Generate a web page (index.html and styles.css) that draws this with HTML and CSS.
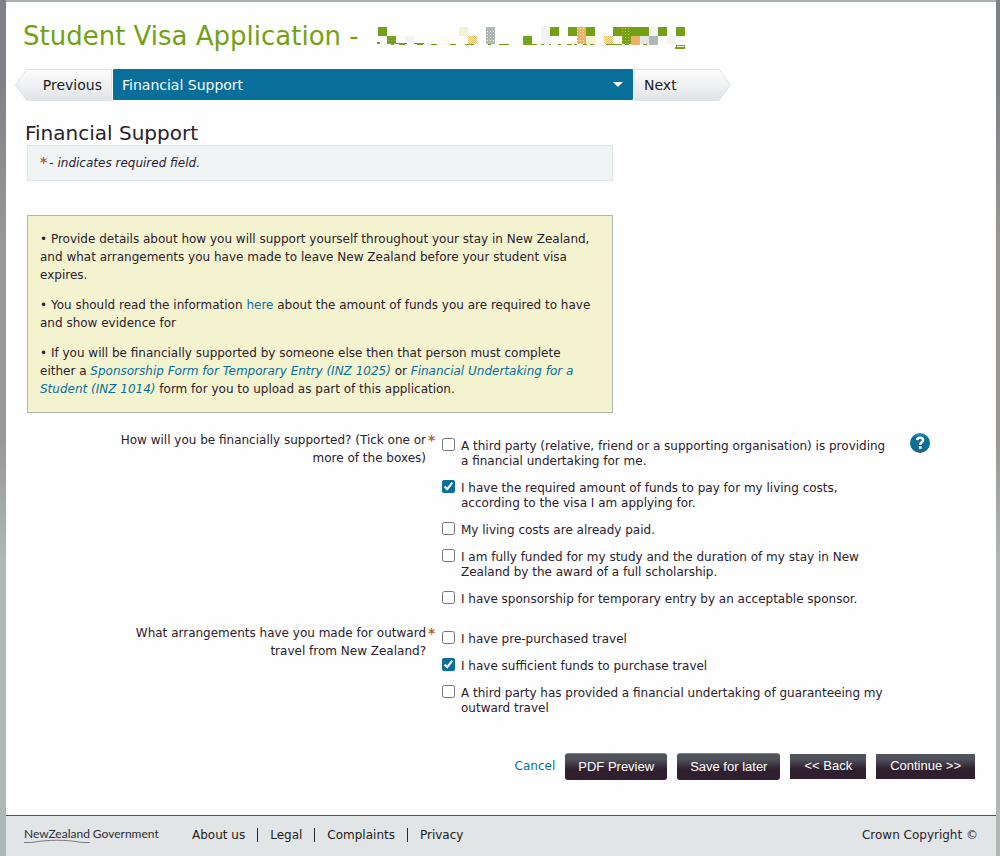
FILE: index.html
```html
<!DOCTYPE html>
<html lang="en">
<head>
<meta charset="utf-8">
<title>Student Visa Application - Financial Support</title>
<link rel="stylesheet" href="styles.css">
</head>
<body>
<div class="page">
  <main class="content">
    <header class="title-row">
      <h1 class="title">Student Visa Application -</h1>
      <svg class="redacted" viewBox="376 20 312 32" width="312" height="32" aria-hidden="true">
        <defs>
          <pattern id="orange-dots" width="2" height="2" patternUnits="userSpaceOnUse"><path d="M0 0h1v1h-1zM1 1h1v1h-1z" fill="#eab15f"/></pattern>
          <pattern id="white-dots" width="3" height="3" patternUnits="userSpaceOnUse"><path d="M1 1h1v1h-1z" fill="#f5f3e8"/></pattern>
          <pattern id="gray-dots" width="3" height="3" patternUnits="userSpaceOnUse"><path d="M1 1h1v1h-1z" fill="#98a59a"/></pattern>
          <pattern id="cream-dots" width="3" height="3" patternUnits="userSpaceOnUse"><path d="M1 1h2v1h-2z" fill="#f3f2cf"/></pattern>
          <pattern id="gold-dots" width="3" height="3" patternUnits="userSpaceOnUse"><path d="M1 1h1v1h-1z" fill="#e5ae5c"/></pattern>
        </defs>
        <g fill="#73a114">
          <path d="M378 27h9v9h-9zM387 36h9v8h-9zM523 36h9v8h-9zM550 27h9v9h-9zM568 27h9v9h-9zM586 27h9v9h-9zM613 27h36v9h-36zM622 36h9v8h-9zM658 27h9v9h-9zM676 27h9v9h-9z"/>
          <path d="M377 42h3v2h-3zM391 43h3v2h-3zM396 43h11v1h-11zM399 44h6v1h-6zM414 43h10v1h-10zM417 44h6v1h-6zM431 44h6v1h-6zM450 44h6v1h-6zM465 44h9v1h-9zM488 44h3v1h-3zM499 44h10v1h-10zM523 44h14v1h-14zM541 44h3v1h-3zM549 44h2v1h-2zM558 44h3v1h-3zM567 44h5v1h-5zM574 44h3v1h-3zM583 44h4v1h-4zM590 44h4v1h-4zM606 44h16v1h-16zM625 44h4v1h-4zM633 44h4v1h-4zM643 44h4v1h-4z"/>
          <path d="M676 45h9v4h-10v-2h1z"/>
        </g>
        <path d="M387 36h9v8h-9zM523 36h9v8h-9z" fill="url(#gray-dots)"/>
        <path d="M622 27h9v17h-9z" fill="url(#gold-dots)"/>
        <path d="M459 27h9v9h-9zM586 36h9v8h-9z" fill="#f4f3d0"/>
        <path d="M441 37h9v7h-9z" fill="url(#cream-dots)"/>
        <path d="M405 36h9v7h-9zM541 27h9v17h-9zM649 27h9v9h-9zM667 36h9v8h-9z" fill="#f0f4f6"/>
        <path d="M468 36h9v8h-9zM604 36h9v8h-9z" fill="url(#orange-dots)"/>
        <path d="M486 27h9v17h-9zM649 36h9v9h-9z" fill="#b0b8b6"/>
        <path d="M487 29h7v13h-7z" fill="url(#white-dots)"/>
        <path d="M577 27h9v17h-9zM631 36h9v9h-9z" fill="#ebb264"/>
        <path d="M577 27h9v17h-9z" fill="url(#white-dots)"/>
        <path d="M640 36h9v8h-9z" fill="#e1e5e7"/>
        <path d="M677 46h7v1h-7z" fill="#f8fbf0"/>
      </svg>
    </header>

    <nav class="steps" aria-label="Application sections">
      <button class="step step-prev" type="button">
        <svg class="step-shape" viewBox="0 0 98 32" preserveAspectRatio="none" aria-hidden="true">
          <defs><linearGradient id="step-fill" x2="0" y2="1"><stop offset="0" stop-color="#fdfdfd"/><stop offset="1" stop-color="#e0e4e6"/></linearGradient></defs>
          <path d="M12 .5H97.500V31.500H12L.5 16Z" fill="url(#step-fill)" stroke="#e0e4e6"/>
        </svg>
        <span class="step-text">Previous</span>
      </button>
      <div class="section-picker">
        <select class="section-select" aria-label="Section"><option>Financial Support</option></select>
        <svg class="caret" viewBox="0 0 10 5" width="10" height="5" aria-hidden="true"><path d="M0 0h10L5 5z" fill="#fff"/></svg>
      </div>
      <button class="step step-next" type="button">
        <svg class="step-shape" viewBox="0 0 98 32" preserveAspectRatio="none" aria-hidden="true">
          <path d="M.5 .5H86L97.500 16L86 31.500H.5Z" fill="url(#step-fill)" stroke="#e0e4e6"/>
        </svg>
        <span class="step-text">Next</span>
      </button>
    </nav>

    <h2 class="section-title">Financial Support</h2>
    <p class="required-note"><span class="star">*</span>- indicates required field.</p>

    <section class="guidance">
      <p>• Provide details about how you will support yourself throughout your stay in New Zealand, and what arrangements you have made to leave New Zealand before your student visa expires.</p>
      <p>• You should read the information <a href="#">here</a> about the amount of funds you are required to have and show evidence for</p>
      <p>• If you will be financially supported by someone else then that person must complete either a <a href="#"><em>Sponsorship Form for Temporary Entry (INZ 1025)</em></a> or <a href="#"><em>Financial Undertaking for a Student (INZ 1014)</em></a> form for you to upload as part of this application.</p>
    </section>

    <form class="form">
      <div class="question" role="group" aria-labelledby="q-support">
        <div class="question-label" id="q-support">How will you be financially supported? (Tick one or more of the boxes)</div>
        <span class="star">*</span>
        <div class="options">
          <label class="option"><input type="checkbox"><span>A third party (relative, friend or a supporting organisation) is providing a financial undertaking for me.</span></label>
          <label class="option"><input type="checkbox" checked><span>I have the required amount of funds to pay for my living costs, according to the visa I am applying for.</span></label>
          <label class="option"><input type="checkbox"><span>My living costs are already paid.</span></label>
          <label class="option"><input type="checkbox"><span>I am fully funded for my study and the duration of my stay in New Zealand by the award of a full scholarship.</span></label>
          <label class="option"><input type="checkbox"><span>I have sponsorship for temporary entry by an acceptable sponsor.</span></label>
        </div>
        <button class="help" type="button" aria-label="Help">
          <svg viewBox="0 0 20 20" width="20" height="20" aria-hidden="true">
            <defs><linearGradient id="help-fill" x2="0" y2="1"><stop offset="0" stop-color="#2f8db5"/><stop offset=".25" stop-color="#086f9b"/><stop offset=".75" stop-color="#086f9b"/><stop offset="1" stop-color="#3f5668"/></linearGradient></defs>
            <circle cx="10" cy="10" r="10" fill="url(#help-fill)"/>
            <path d="M7 7.200C7.200 5.300 8.500 4.800 10 4.800C12 4.800 13.100 5.800 13.100 7.200C13.100 9.300 10.200 9 10.200 12" fill="none" stroke="#fff" stroke-width="2.500"/>
            <path d="M8.900 13.300h2.700v2.500h-2.700z" fill="#fff"/>
          </svg>
        </button>
      </div>

      <div class="question" role="group" aria-labelledby="q-travel">
        <div class="question-label" id="q-travel">What arrangements have you made for outward travel from New Zealand?</div>
        <span class="star">*</span>
        <div class="options">
          <label class="option"><input type="checkbox"><span>I have pre-purchased travel</span></label>
          <label class="option"><input type="checkbox" checked><span>I have sufficient funds to purchase travel</span></label>
          <label class="option"><input type="checkbox"><span>A third party has provided a financial undertaking of guaranteeing my outward travel</span></label>
        </div>
      </div>

      <div class="actions">
        <a class="cancel" href="#">Cancel</a>
        <button class="btn btn-round" type="button">PDF Preview</button>
        <button class="btn btn-round" type="button">Save for later</button>
        <button class="btn" type="button">&lt;&lt; Back</button>
        <button class="btn" type="button">Continue &gt;&gt;</button>
      </div>
    </form>
  </main>

  <footer class="footer">
    <div class="logo"><span class="logo-nz">NewZealand<svg class="logo-line" viewBox="0 0 68 4" preserveAspectRatio="none" aria-hidden="true"><path d="M0 3.500H8C25 .5 43 .5 60 3.500H68" fill="none" stroke="#77787d"/></svg></span><span>Government</span></div>
    <ul class="footer-links">
      <li><a href="#">About us</a></li>
      <li><a href="#">Legal</a></li>
      <li><a href="#">Complaints</a></li>
      <li><a href="#">Privacy</a></li>
    </ul>
    <span class="copyright">Crown Copyright ©</span>
  </footer>
</div>
</body>
</html>
```

FILE: styles.css
```css
* { box-sizing: border-box; }

body {
  margin: 0;
  min-height: 100vh;
  display: flex;
  padding: 0 4px 0 6px;
  background: linear-gradient(#808187 0, #808187 80px, #999896 240px, #999896 440px, #aeb7b4 560px, #aeb7b4 100%);
  color: #2b202c;
  font: 12px/18px "DejaVu Sans", Verdana, sans-serif;
}

h1, h2, p, ul { margin: 0; padding: 0; font-weight: normal; }

a { color: #086f9b; text-decoration: none; }

.page {
  flex: 1;
  display: flex;
  flex-direction: column;
  border-top: 2px solid #a9b2b0;
  background: #fefefe;
}

.content {
  flex: 1;
  padding: 18px 21px 35px 21px;
}

.title-row { display: flex; margin-left: -4px; gap: 17px; }

.title {
  color: #73a114;
  font-size: 26px;
  line-height: 32px;
  white-space: nowrap;
}

.redacted { flex: none; }

.steps {
  display: flex;
  gap: 1px;
  margin: 17px 0 20px -12px;
  max-width: 716px;
}

.step {
  position: relative;
  flex: none;
  width: 97px;
  height: 32px;
  padding: 0;
  border: 0;
  background: none;
  color: #1c1a22;
  font: 14px/32px "DejaVu Sans", Verdana, sans-serif;
}

.step-prev { padding-right: 10px; text-align: right; }
.step-next { padding-left: 10px; text-align: left; }

.step-shape {
  position: absolute;
  inset: 0;
  width: 100%;
  height: 100%;
}

.step-text { position: relative; }

.section-picker { position: relative; flex: 1; }

.section-select {
  appearance: none;
  display: block;
  width: 100%;
  height: 31px;
  padding: 0 30px 0 9px;
  border: 0;
  border-radius: 1px;
  background: #086f9b;
  color: #fff;
  font: 14px "DejaVu Sans", Verdana, sans-serif;
}

.caret { position: absolute; right: 10px; top: 13px; pointer-events: none; }

.section-title {
  margin-left: -2px;
  font-size: 20px;
  line-height: 24px;
}

.required-note,
.guidance { max-width: 586px; }

.required-note {
  padding: 8px 12px;
  border: 1px solid #e0e4e6;
  background: #f0f4f5;
  font-style: italic;
}

.star {
  color: #b5651d;
  font-size: 14px;
  font-style: normal;
  font-weight: bold;
}

.required-note .star { padding-right: 2px; line-height: 16px; }

.guidance {
  display: flex;
  flex-direction: column;
  gap: 12px;
  margin-top: 34px;
  padding: 14px 16px 14px 12px;
  border: 1px solid #aeb7b4;
  background: #f4f3d0;
}

.form {
  display: flex;
  flex-direction: column;
  gap: 17px;
  margin-top: 18px;
}

.question {
  display: grid;
  grid-template-columns: 320px 10px 452px 20px;
  column-gap: 2px;
  margin-left: 79px;
}

.question-label { text-align: right; }

.options {
  display: flex;
  flex-direction: column;
  gap: 12px;
  padding: 8px 0 0 2px;
}

.option {
  display: flex;
  gap: 6px;
  line-height: 15px;
}

.option input {
  flex: none;
  width: 13px;
  height: 13px;
  margin: -1px 0 0;
  accent-color: #086f9b;
}

.help {
  align-self: start;
  margin: 2px 0 0 16px;
  padding: 0;
  border: 0;
  background: none;
  line-height: 0;
}

.actions {
  display: flex;
  justify-content: flex-end;
  align-items: center;
  gap: 10px;
  margin-top: 20px;
}

.cancel { padding-bottom: 2px; }

.btn {
  height: 25px;
  padding: 0 14px 2px;
  border: 0;
  background: linear-gradient(#50525c 0, #50525c 20%, #301f2f 60%);
  color: #fff;
  font: 13px/22px "Liberation Sans", Arial, sans-serif;
  white-space: nowrap;
}

.btn-round {
  height: 27px;
  padding: 0 13px;
  border-top: 1px solid #808187;
  border-radius: 3px;
}

.footer {
  display: flex;
  align-items: center;
  min-height: 41px;
  padding: 0 18px 3px;
  border-top: 1px solid #50525c;
  background: #e1e5e5;
}

.logo {
  display: flex;
  gap: 3px;
  width: 168px;
  padding-bottom: 2px;
  color: #2f2c36;
  font: 12px/16px Lato, "Noto Sans", sans-serif;
}

.logo-nz { position: relative; }

.logo-line {
  position: absolute;
  left: 0;
  bottom: -1px;
  width: 100%;
  height: 4px;
}

.footer-links { display: flex; list-style: none; line-height: 14px; }
.footer-links li + li { margin-left: 12px; padding-left: 12px; border-left: 1px solid #2b202c; }
.footer-links a { color: #1c1a22; }

.copyright { margin-left: auto; }
```
